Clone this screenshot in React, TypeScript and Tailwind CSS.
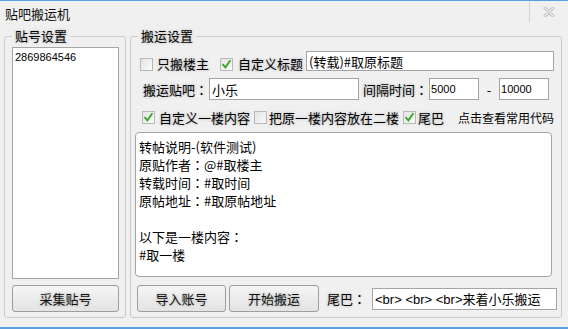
import React from "react";

const glow = "[text-shadow:0_0_3px_rgba(0,0,0,0.3)]";

function Check({ checked }: { checked?: boolean }) {
  return (
    <span className="flex h-[13px] w-[13px] shrink-0 items-center justify-center border border-[#b8b8b8] bg-linear-to-br from-[#e4e4e4] to-[#fafafa]">
      {checked && (
        <svg viewBox="0 0 11 11" className="h-[11px] w-[11px]">
          <path d="M2 5.6 L4.4 8.4 L9 1.8" fill="none" stroke="#3ea82a" strokeWidth="1.9" strokeLinecap="round" />
        </svg>
      )}
    </span>
  );
}

// full-width colon, centred like the original's font
function Colon() {
  return <span className="font-['Noto_Sans_CJK_TC',sans-serif]">：</span>;
}

function Button({ label, className = "" }: { label: string; className?: string }) {
  return (
    <button
      className={`flex h-[27px] items-center justify-center rounded-[3px] border border-[#9e9e9e] bg-linear-to-b from-[#f5f5f5] to-[#e3e3e3] text-[13px] leading-[16px] text-[#111] ${glow} ${className}`}
    >
      {label}
    </button>
  );
}

const bodyText = `转帖说明-(软件测试)
原贴作者：@#取楼主
转载时间：#取时间
原帖地址：#取原帖地址

以下是一楼内容：
#取一楼`;

export default function App() {
  return (
    <div className="flex h-[329px] w-[568px] flex-col overflow-hidden border-t border-b-2 border-[#5a9fe0] bg-[#f0f0f0] font-['Noto_Sans_CJK_SC',sans-serif] text-black">
      {/* title bar */}
      <div className="flex h-[27px] shrink-0 items-start">
        <div className="pl-[5px] pt-[5px] text-[13px] leading-[16px] text-[#111]">贴吧搬运机</div>
        <div className="ml-auto mr-[13px] h-[21px] w-px bg-[#d2d2d2]" />
        <svg viewBox="0 0 12 10" className="mr-[13px] mt-[6px] h-[10px] w-[12px]">
          <path d="M2 1 L10 9 M10 1 L2 9" stroke="#bcbcbc" strokeWidth="3" strokeLinecap="round" />
          <path d="M2 1 L10 9 M10 1 L2 9" stroke="#ececec" strokeWidth="1.4" strokeLinecap="round" />
        </svg>
      </div>

      <div className="flex gap-[4px] pl-[4px]">
        {/* 贴号设置 */}
        <fieldset className="flex h-[290px] w-[122px] flex-col rounded-[3px] border border-[#cbcbcb] pl-[7px] pt-[3px]">
          <legend className={`px-[3px] text-[13px] leading-[16px] ${glow}`}>贴号设置</legend>
          <div className="h-[232px] w-[107px] border border-[#a5a5a5] bg-white pl-[2px] pt-[2px] font-['Liberation_Sans',sans-serif] text-[11px] leading-[14px]">
            2869864546
          </div>
          <Button label="采集贴号" className="mt-[6px] w-[107px]" />
        </fieldset>

        {/* 搬运设置 */}
        <fieldset className="flex h-[290px] w-[432px] flex-col rounded-[3px] border border-[#cbcbcb] pl-[4px] pt-[7px]">
          <legend className={`ml-[3px] px-[3px] text-[13px] leading-[16px] ${glow}`}>搬运设置</legend>

          <div className="flex h-[20px] items-end pl-[5px] text-[13px] leading-[15px]">
            <Check />
            <span className={`ml-[4px] ${glow}`}>只搬楼主</span>
            <span className="ml-[11px] flex items-end">
              <Check checked />
            </span>
            <span className={`ml-[5px] ${glow}`}>自定义标题</span>
            <input
              defaultValue="(转载)#取原标题"
              className="ml-[3px] h-[20px] w-[248px] border border-[#a5a5a5] bg-white px-[2px] text-[13px] leading-[18px] outline-none"
            />
          </div>

          <div className="mt-[7px] flex h-[22px] items-center pl-[8px] text-[13px] leading-[15px]">
            <span className={glow}>
              搬运贴吧<Colon />
            </span>
            <input
              defaultValue="小乐"
              className="ml-[1px] h-[22px] w-[150px] border border-[#a5a5a5] bg-white px-[2px] text-[13px] outline-none"
            />
            <span className={`ml-[4px] ${glow}`}>
              间隔时间<Colon />
            </span>
            <input
              defaultValue="5000"
              className="ml-[1px] h-[22px] w-[50px] border border-[#a5a5a5] bg-white px-[1px] font-['Liberation_Sans',sans-serif] text-[11px] outline-none"
            />
            <span className="w-[20px] text-center">-</span>
            <input
              defaultValue="10000"
              className="h-[22px] w-[50px] border border-[#a5a5a5] bg-white px-[1px] font-['Liberation_Sans',sans-serif] text-[11px] outline-none"
            />
          </div>

          <div className="mt-[10px] flex h-[14px] items-center pl-[7px] text-[13px] leading-[15px]">
            <Check checked />
            <span className={`ml-[4px] ${glow}`}>自定义一楼内容</span>
            <span className="ml-[4px] flex">
              <Check />
            </span>
            <span className={`ml-[2px] ${glow}`}>把原一楼内容放在二楼</span>
            <span className="ml-[4px] flex">
              <Check checked />
            </span>
            <span className={`ml-[2px] ${glow}`}>尾巴</span>
            <span className="ml-[14px] text-[12px]">点击查看常用代码</span>
          </div>

          <textarea
            defaultValue={bodyText}
            className="mt-[8px] h-[145px] w-[417px] resize-none overflow-hidden rounded-[4px] border border-[#a5a5a5] bg-white pl-[3px] pt-[5px] font-['Noto_Sans_CJK_TC',sans-serif] text-[13px] leading-[18px] outline-none"
          />

          <div className="mt-[8px] flex h-[27px] items-center pl-[2px]">
            <Button label="导入账号" className="w-[89px]" />
            <Button label="开始搬运" className="ml-[3px] w-[90px]" />
            <span className={`ml-[8px] text-[13px] leading-[15px] ${glow}`}>
              尾巴<Colon />
            </span>
            <input
              defaultValue="<br> <br> <br>来着小乐搬运"
              className="ml-[6px] h-[22px] w-[185px] border border-[#a5a5a5] bg-white px-[2px] font-['Liberation_Sans','Noto_Sans_CJK_SC',sans-serif] text-[13px] outline-none"
            />
          </div>
        </fieldset>
      </div>
    </div>
  );
}
